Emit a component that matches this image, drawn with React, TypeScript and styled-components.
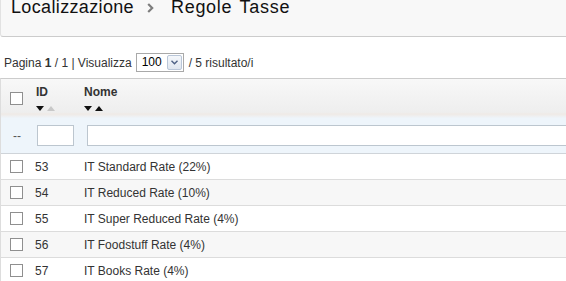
import styled, { createGlobalStyle } from 'styled-components'

const GlobalStyle = createGlobalStyle`
  html, body {
    margin: 0;
    padding: 0;
    background: #fff;
    overflow: hidden;
  }
  body {
    font-family: 'Liberation Sans', Arial, sans-serif;
    color: #333;
  }
`

const rows = [
  { id: 53, name: 'IT Standard Rate (22%)' },
  { id: 54, name: 'IT Reduced Rate (10%)' },
  { id: 55, name: 'IT Super Reduced Rate (4%)' },
  { id: 56, name: 'IT Foodstuff Rate (4%)' },
  { id: 57, name: 'IT Books Rate (4%)' },
]

export default function App() {
  return (
    <Page>
      <GlobalStyle />
      <TitleBar>
        <Title>
          Localizzazione
          <Sep>
            <svg width="7" height="10" viewBox="0 0 7 10">
              <path d="M1.2 1 L5.2 5 L1.2 9" fill="none" stroke="#7d7d7d" strokeWidth="2.2" />
            </svg>
          </Sep>
          <Current>Regole Tasse</Current>
        </Title>
      </TitleBar>

      <Pager>
        Pagina <b>1</b> / 1 | Visualizza
        <Select>
          <SelectValue>100</SelectValue>
          <SelectButton>
            <svg width="7" height="5" viewBox="0 0 7 5">
              <path d="M0.5 0.8 L3.5 3.8 L6.5 0.8" fill="none" stroke="#4d6185" strokeWidth="1.4" />
            </svg>
          </SelectButton>
        </Select>
        / 5 risultato/i
      </Pager>

      <Table>
        <HeadRow>
          <CheckCell>
            <CheckBox />
          </CheckCell>
          <IdCell>
            <HeadLabel>ID</HeadLabel>
            <Arrows>
              <Arrow dir="down" />
              <Arrow dir="up" muted />
            </Arrows>
          </IdCell>
          <NameCell>
            <HeadLabel>Nome</HeadLabel>
            <Arrows>
              <Arrow dir="down" />
              <Arrow dir="up" />
            </Arrows>
          </NameCell>
        </HeadRow>

        <FilterRow>
          <CheckCell>
            <Dashes>--</Dashes>
          </CheckCell>
          <IdCell>
            <FilterInput width={35} />
          </IdCell>
          <NameCell>
            <FilterInput width={560} />
          </NameCell>
        </FilterRow>

        {rows.map((r, i) => (
          <DataRow key={r.id} odd={i % 2 === 1}>
            <CheckCell>
              <CheckBox />
            </CheckCell>
            <IdCell>{r.id}</IdCell>
            <NameCell>{r.name}</NameCell>
          </DataRow>
        ))}
      </Table>
    </Page>
  )
}

const Page = styled.div`
  width: 566px;
  height: 281px;
  overflow: hidden;
  font-size: 12px;
`

const TitleBar = styled.div`
  display: flow-root;
  width: 620px;
  height: 36px;
  background: #f8f8f8;
  border-left: 1px solid #e2e2e2;
  border-bottom: 1px solid #cccccc;
  border-bottom-left-radius: 3px;
  padding-left: 10px;
`

const Title = styled.h1`
  display: flex;
  align-items: center;
  margin: -2px 0 0;
  font-size: 18px;
  line-height: 18px;
  font-weight: normal;
  letter-spacing: 0.35px;
  color: #111;
  white-space: nowrap;
`

const Sep = styled.span`
  display: flex;
  margin: 1px 17px 0 13px;
`

const Current = styled.span`
  letter-spacing: 0.7px;
  word-spacing: 2px;
`

const Pager = styled.div`
  display: flex;
  align-items: center;
  height: 19px;
  margin: 16px 0 0 4px;
  color: #333;
  white-space: pre;
  b {
    font-weight: bold;
  }
`

const Select = styled.div`
  display: flex;
  height: 17px;
  width: 46px;
  margin: 0 5px 0 4px;
  border: 1px solid #a9a9a9;
  background: #fff;
`

const SelectValue = styled.span`
  flex: 1;
  padding-left: 5px;
  line-height: 17px;
  color: #000;
`

const SelectButton = styled.span`
  display: flex;
  align-items: center;
  justify-content: center;
  width: 15px;
  margin: 1px;
  border: 1px solid #b9c6d8;
  border-radius: 2px;
  background: linear-gradient(#f4f7fb, #dfe6ef);
  box-sizing: border-box;
`

const Table = styled.div`
  width: 640px;
  margin-top: 6px;
  border-left: 1px solid #dddddd;
  border-top: 1px solid #cccccc;
`

const Row = styled.div`
  display: grid;
  grid-template-columns: 34px 49px 1fr;
  align-items: center;
`

const HeadRow = styled(Row)`
  height: 39px;
  align-items: start;
  background: linear-gradient(#f8f8f8 0%, #eeeeee 85%, #efeae6 90%, #eef4fa 100%);
`

const FilterRow = styled(Row)`
  height: 35px;
  background: #eef5fb;
  border-bottom: 1px solid #cfd4d9;
`

const DataRow = styled(Row)<{ odd?: boolean }>`
  height: 25px;
  background: ${({ odd }) => (odd ? '#f7f7f7' : '#ffffff')};
  border-bottom: 1px solid #dcdcdc;
`

const CheckCell = styled.div`
  display: flex;
  align-items: center;
  padding-left: 9px;
  ${HeadRow} & {
    padding-top: 13px;
  }
`

const IdCell = styled.div`
  ${HeadRow} & {
    padding-top: 6px;
    padding-left: 1px;
  }
  ${FilterRow} & {
    padding-left: 2px;
  }
`

const NameCell = styled.div`
  ${HeadRow} & {
    padding-top: 6px;
  }
  ${FilterRow} & {
    padding-left: 3px;
  }
`

const CheckBox = styled.span`
  display: block;
  width: 11px;
  height: 11px;
  border: 1px solid #8f8f8f;
  background: #fff;
`

const HeadLabel = styled.div`
  font-weight: bold;
  color: #333;
  line-height: 14px;
`

const Arrows = styled.div`
  display: flex;
  gap: 3px;
  margin-top: 7px;
`

const Arrow = styled.span<{ dir: 'up' | 'down'; muted?: boolean }>`
  width: 0;
  height: 0;
  border-left: 4px solid transparent;
  border-right: 4px solid transparent;
  ${({ dir, muted }) =>
    dir === 'down'
      ? `border-top: 5px solid ${muted ? '#c8c8c8' : '#111'};`
      : `border-bottom: 5px solid ${muted ? '#c8c8c8' : '#111'};`}
`

const Dashes = styled.span`
  padding-left: 3px;
  color: #555;
`

const FilterInput = styled.span<{ width: number }>`
  display: block;
  width: ${({ width }) => width}px;
  height: 19px;
  border: 1px solid #bcc6cf;
  background: #fff;
`
